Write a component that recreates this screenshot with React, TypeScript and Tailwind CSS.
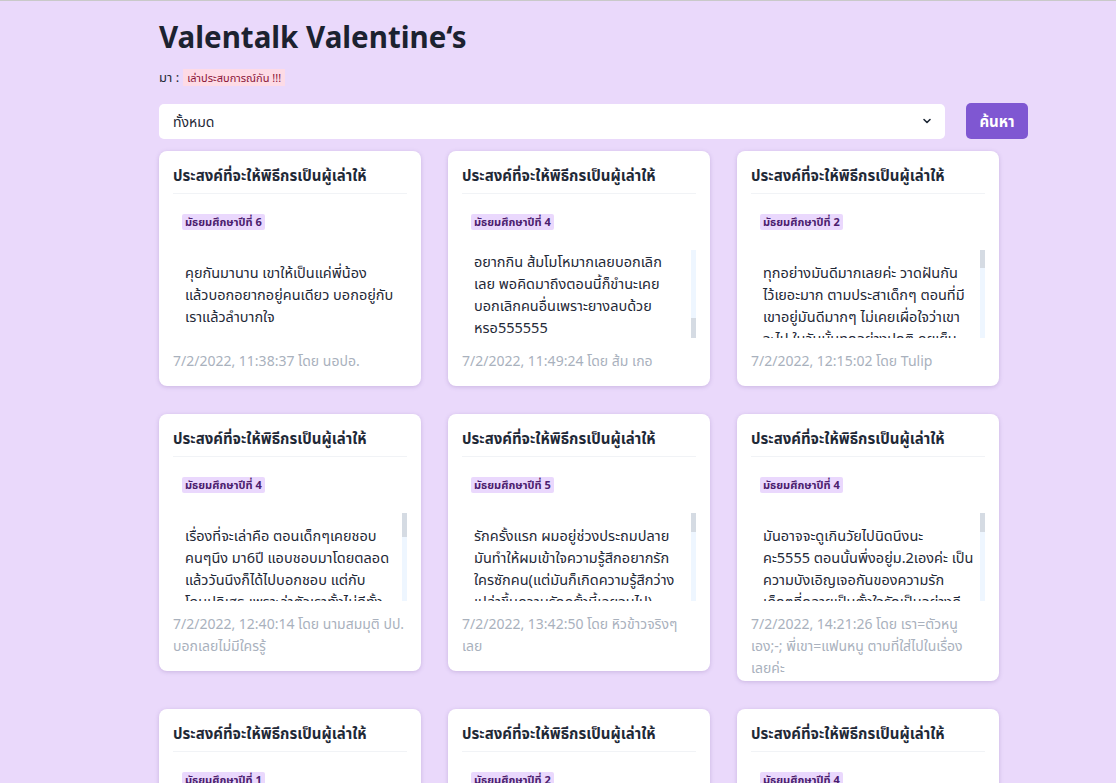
import React, { useEffect, useRef } from "react";

type Post = {
  grade: string;
  body: string;
  footer: string;
  scroll?: "none" | "top" | "bottom";
  thumb?: number;
  tight?: boolean;
};

const posts: Post[] = [
  {
    grade: "มัธยมศึกษาปีที่ 6",
    body: "คุยกันมานาน เขาให้เป็นแค่พี่น้อง\nแล้วบอกอยากอยู่คนเดียว บอกอยู่กับ\nเราแล้วลำบากใจ",
    footer: "7/2/2022, 11:38:37 โดย นอปอ.",
    scroll: "none",
  },
  {
    grade: "มัธยมศึกษาปีที่ 4",
    body: "อยากกิน ส้มโมโหมากเลยบอกเลิก\nเลย พอคิดมาถึงตอนนี้ก็ขำนะเคย\nบอกเลิกคนอื่นเพราะยางลบด้วย\nหรอ555555",
    footer: "7/2/2022, 11:49:24 โดย ส้ม เกอ",
    scroll: "bottom",
    thumb: 20,
  },
  {
    grade: "มัธยมศึกษาปีที่ 2",
    body: "ทุกอย่างมันดีมากเลยค่ะ วาดฝันกัน\nไว้เยอะมาก ตามประสาเด็กๆ ตอนที่มี\nเขาอยู่มันดีมากๆ ไม่เคยเผื่อใจว่าเขา\nจะไป ในวันนั้นทุกอย่างปกติ คุยเย็น\nกันเหมือนทุกวัน แต่พอวันรุ่งขึ้น\nเขาก็หายไป ไม่บอกลาสักคำ",
    footer: "7/2/2022, 12:15:02 โดย Tulip",
    scroll: "top",
    thumb: 18,
  },
  {
    grade: "มัธยมศึกษาปีที่ 4",
    body: "เรื่องที่จะเล่าคือ ตอนเด็กๆเคยชอบ\nคนๆนึง มา6ปี แอบชอบมาโดยตลอด\nแล้ววันนึงก็ได้ไปบอกชอบ แต่กับ\nโดนปฏิเสธ เพราะว่าตัวเราทั้งไม่ดีทั้ง\nไม่เก่ง แต่ก็ยังไม่เลิกชอบ",
    footer: "7/2/2022, 12:40:14 โดย นามสมมุติ ปป.\nบอกเลยไม่มีใครรู้",
    scroll: "top",
    thumb: 24,
  },
  {
    grade: "มัธยมศึกษาปีที่ 5",
    body: "รักครั้งแรก ผมอยู่ช่วงประถมปลาย\nมันทำให้ผมเข้าใจความรู้สึกอยากรัก\nใครซักคน(แต่มันก็เกิดความรู้สึกว่าง\nเปล่าขึ้นความรักครั้งนี้เลยจบไป)\nแต่ก็เป็นความทรงจำที่ดีเสมอ",
    footer: "7/2/2022, 13:42:50 โดย หิวข้าวจริงๆ\nเลย",
    scroll: "top",
    thumb: 19,
  },
  {
    grade: "มัธยมศึกษาปีที่ 4",
    body: "มันอาจจะดูเกินวัยไปนิดนึงนะ\nคะ5555 ตอนนั้นพึ่งอยู่ม.2เองค่ะ เป็น\nความบังเอิญเจอกันของความรัก\nเด็กๆที่กลายเป็นตั้งใจรักเป็นอย่างดี\nจนถึงตอนนี้ก็ยังคบกันอยู่ค่ะ",
    footer: "7/2/2022, 14:21:26 โดย เรา=ตัวหนู\nเอง;-; พี่เขา=แฟนหนู ตามที่ใส่ไปในเรื่อง\nเลยค่ะ",
    scroll: "top",
    thumb: 19,
    tight: true,
  },
  {
    grade: "มัธยมศึกษาปีที่ 1",
    body: "ตอนนั้นยังเด็กมาก ไม่รู้ว่าความรัก\nคืออะไร แต่ก็รู้สึกดีทุกครั้งที่ได้เจอเขา",
    footer: "7/2/2022, 15:02:11 โดย ไม่บอก",
    scroll: "none",
  },
  {
    grade: "มัธยมศึกษาปีที่ 2",
    body: "แอบชอบเพื่อนในห้องมาตั้งแต่ ม.1\nแต่ไม่กล้าบอกสักที",
    footer: "7/2/2022, 15:20:45 โดย คนขี้อาย",
    scroll: "none",
  },
  {
    grade: "มัธยมศึกษาปีที่ 4",
    body: "ความรักครั้งแรกของเราเริ่มจาก\nการเป็นเพื่อนกันก่อน",
    footer: "7/2/2022, 16:05:33 โดย ฟ้า",
    scroll: "none",
  },
];

function Card({ post }: { post: Post }) {
  const ref = useRef<HTMLDivElement>(null);
  useEffect(() => {
    if (post.scroll === "bottom" && ref.current) {
      ref.current.scrollTop = ref.current.scrollHeight;
    }
  }, [post.scroll]);
  return (
    <div
      className={`bg-white rounded-lg shadow-[0_1px_4px_rgba(120,90,160,0.28)] px-[14px] pt-[14px] ${
        post.tight ? "pb-[2px]" : "pb-[14px]"
      }`}
    >
      <h2 className="text-[15px] leading-[20px] font-bold text-[#1f2937] pb-[8px] border-b border-[#f1f3f6]">
        ประสงค์ที่จะให้พิธีกรเป็นผู้เล่าให้
      </h2>
      <div className="flex pl-[9px] pt-[20px]">
        <span className="block bg-[#ead8fd] text-[#4c1d6e] text-[11px] leading-[16px] font-bold px-[3px] rounded-[2px]">
          {post.grade}
        </span>
      </div>
      <div className="relative mt-[20px] h-[88px]">
        <div
          ref={ref}
          className="h-full overflow-hidden pl-[12px] pr-[8px] pt-[11px] text-[14.5px] leading-[22px] text-[#1f2937] whitespace-pre"
        >
          {post.body}
        </div>
        {post.scroll !== "none" && (
          <div
            className={`absolute right-0 top-0 bottom-0 w-[5px] bg-[#eef6ff] flex flex-col ${
              post.scroll === "bottom" ? "justify-end" : "justify-start"
            }`}
          >
            <div className="w-full bg-[#d5dbe3]" style={{ height: post.thumb }} />
          </div>
        )}
      </div>
      <div className="mt-[12px] text-[14px] leading-[22px] text-[#a9b1bd] whitespace-pre-line">
        {post.footer}
      </div>
    </div>
  );
}

export default function App() {
  return (
    <div className="min-h-screen bg-[#ead9fb] border-t border-[#c9c9c9] font-['Segoe_UI','Noto_Sans','Noto_Sans_Thai','Leelawadee_UI','Tahoma',sans-serif]">
      <div className="pl-[159px] pr-[88px] pt-[17px]">
        <h1 className="text-[29.5px] leading-[38px] font-bold text-[#1c2230]">Valentalk Valentine‘s</h1>
        <div className="mt-[12px] flex items-center gap-[4px] text-[13px] leading-[18px] text-[#1f2937]">
          <span>มา :</span>
          <span className="bg-[#fddbe6] text-[#8a1538] text-[11px] leading-[17px] px-[4px]">
            เล่าประสบการณ์กัน !!!
          </span>
        </div>
        <div className="mt-[17px] flex items-center gap-[21px]">
          <div className="flex-1 h-[35px] bg-white rounded-[5px] flex items-center justify-between pl-[14px] pr-[12px] text-[14px] text-[#1f2937]">
            <span>ทั้งหมด</span>
            <svg width="12" height="12" viewBox="0 0 24 24" fill="none" stroke="#1f2937" strokeWidth="3.2" strokeLinecap="round" strokeLinejoin="round">
              <path d="M6 9l6 6 6-6" />
            </svg>
          </div>
          <button className="h-[36px] w-[62px] rounded-[5px] bg-[#7f57d2] text-white text-[15px] font-bold">
            ค้นหา
          </button>
        </div>
        <div className="mt-[12px] grid grid-cols-[262px_262px_262px] gap-x-[27px] gap-y-[28px] items-start">
          {posts.map((p, i) => (
            <Card key={i} post={p} />
          ))}
        </div>
        <div className="h-[40px]" />
      </div>
    </div>
  );
}
